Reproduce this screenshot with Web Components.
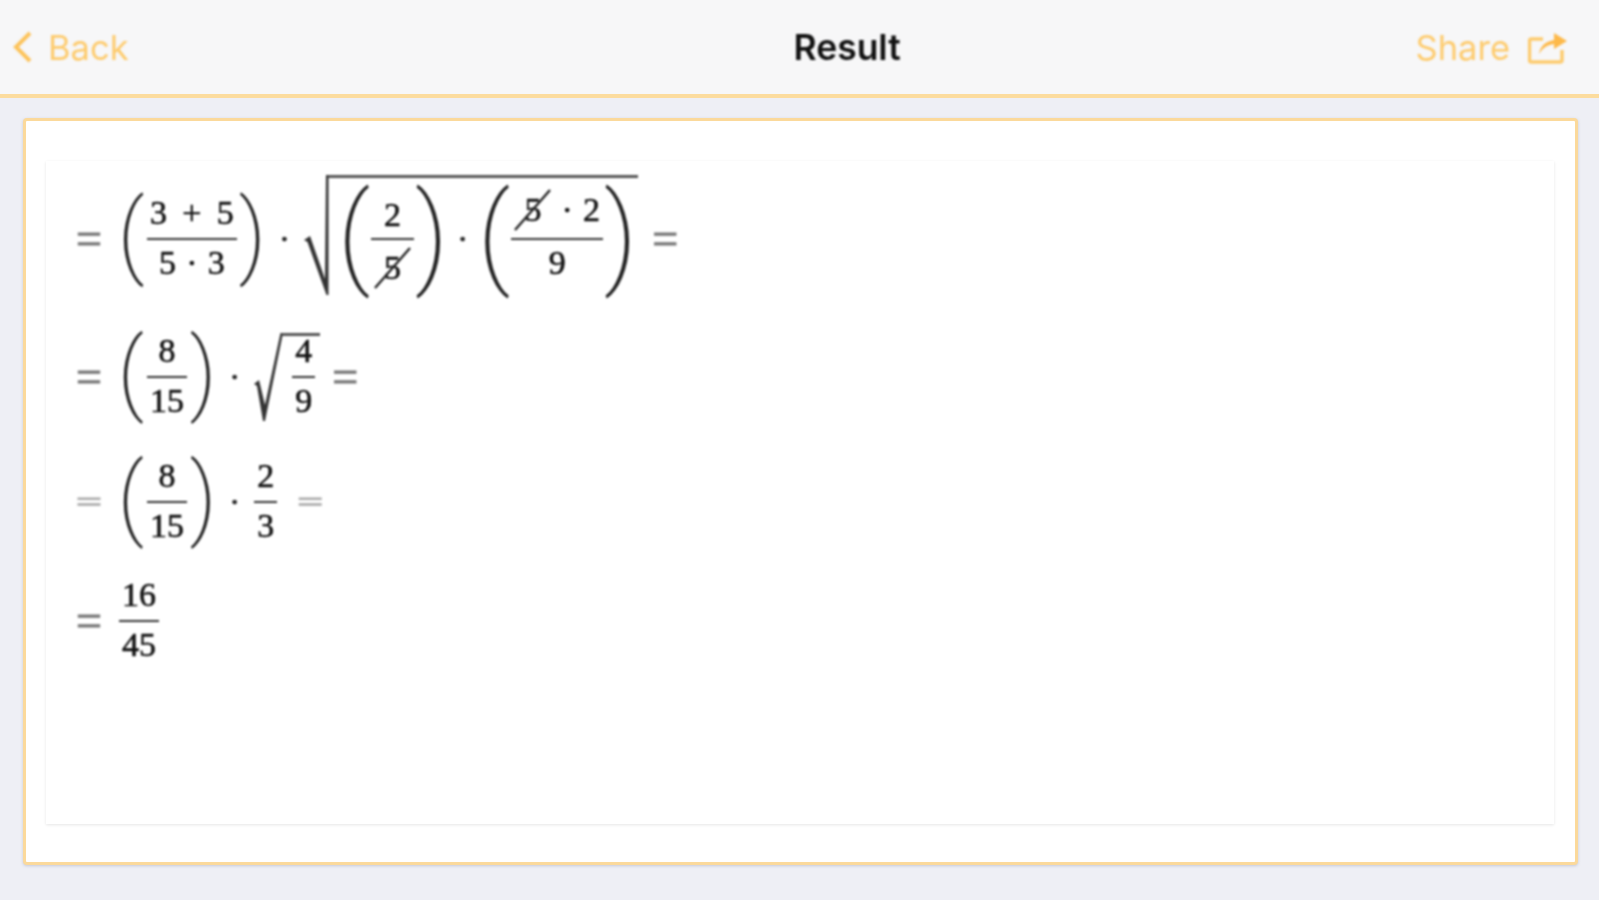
<!DOCTYPE html>
<html>
<head>
<meta charset="utf-8">
<title>Result</title>
<style>
  html, body { margin: 0; height: 100%; }
  body { background: #eeeff5; display: flex; flex-direction: column; height: 900px; overflow: hidden; }
</style>
</head>
<body>
<nav-bar></nav-bar>
<result-card>
  <math-row style="margin-top:14px">
    <math-op>=</math-op>
    <math-parens h="92"><math-frac><span slot="num">3 + 5</span><span slot="den" style="word-spacing:.05em">5 · 3</span></math-frac></math-parens>
    <math-op dot>·</math-op>
    <math-sqrt big>
      <math-parens h="112" w="22"><math-frac drop><span slot="num">2</span><span slot="den"><math-cancel>5</math-cancel></span></math-frac></math-parens>
      <math-op dot style="margin:0 15px">·</math-op>
      <math-parens h="112" w="22"><math-frac lift><span slot="num" style="word-spacing:.05em"><math-cancel>5</math-cancel> · 2</span><span slot="den">9</span></math-frac></math-parens>
    </math-sqrt>
    <math-op style="margin-left:14px">=</math-op>
  </math-row>
  <math-row style="margin-top:29px">
    <math-op>=</math-op>
    <math-parens h="90"><math-frac><span slot="num">8</span><span slot="den">15</span></math-frac></math-parens>
    <math-op dot>·</math-op>
    <math-sqrt><math-frac><span slot="num">4</span><span slot="den">9</span></math-frac></math-sqrt>
    <math-op style="margin-left:12px">=</math-op>
  </math-row>
  <math-row style="margin-top:35px">
    <math-op tight>=</math-op>
    <math-parens h="90"><math-frac><span slot="num">8</span><span slot="den">15</span></math-frac></math-parens>
    <math-op dot>·</math-op>
    <math-frac><span slot="num">2</span><span slot="den">3</span></math-frac>
    <math-op tight>=</math-op>
  </math-row>
  <math-row style="margin-top:31px">
    <math-op style="margin-right:17px">=</math-op>
    <math-frac><span slot="num">16</span><span slot="den">45</span></math-frac>
  </math-row>
</result-card>

<script>
class NavBar extends HTMLElement {
    constructor() {
        super();
        this.attachShadow({ mode: 'open' });
        this.shadowRoot.innerHTML = `
            <style>
                :host {
                    display: block;
                    flex: none;
                    height: 94px;
                    background: #f7f7f8;
                    border-bottom: 4px solid #fcdc9e;
                    font: 34.5px Inter, Roboto, "Liberation Sans", sans-serif;
                    color: #fdcb6e;
                }
                .bar {
                    height: 100%;
                    display: flex;
                    align-items: center;
                    padding: 0 32px 0 13px;
                    filter: blur(1px);
                }
                .back { display: flex; align-items: center; gap: 16px; }
                .title {
                    flex: 1;
                    text-align: center;
                    padding-left: 150px;
                    color: #111;
                    font-weight: 600;
                    font-size: 35.5px;
                }
                .share { display: flex; align-items: center; gap: 18px; }
                svg { display: block; }
            </style>
            <div class="bar">
                <div class="back">
                    <svg width="19" height="32" viewBox="0 0 19 32"><path d="M17 2 L3 16 L17 30" fill="none" stroke="#fcc35c" stroke-width="4"/></svg>
                    <span>Back</span>
                </div>
                <div class="title">Result</div>
                <div class="share">
                    <span>Share</span>
                    <svg width="39" height="33" viewBox="0 0 39 33">
                        <path d="M15 8 H3.5 Q1.5 8 1.5 10 V29 Q1.5 31 3.5 31 H32 Q34 31 34 29 V19" fill="none" stroke="#fdcb6e" stroke-width="3.5"/>
                        <path d="M11 23 Q13 11 26 9 V2 L39 10 L26 18 V13 Q16 14 11 23 Z" fill="#fdb94a"/>
                    </svg>
                </div>
            </div>
        `;
    }
}

class ResultCard extends HTMLElement {
    constructor() {
        super();
        this.attachShadow({ mode: 'open' });
        this.shadowRoot.innerHTML = `
            <style>
                :host {
                    display: flex;
                    flex: 1;
                    margin: 20px 21px 35px 23px;
                    padding: 40px 21px 38px 20px;
                    background: #fff;
                    border: 3px solid #fbd99b;
                    border-radius: 4px;
                    box-shadow: 0 1px 3px rgba(120, 130, 160, .35);
                }
                .panel {
                    flex: 1;
                    background: #fff;
                    box-shadow: 0 1px 3px rgba(0, 0, 0, .1);
                    padding-left: 30px;
                    overflow: hidden;
                }
                .math {
                    overflow: hidden;
                    padding-bottom: 8px;
                    filter: blur(1px);
                }
            </style>
            <div class="panel"><div class="math"><slot></slot></div></div>
        `;
    }
}

class MathRow extends HTMLElement {
    constructor() {
        super();
        this.attachShadow({ mode: 'open' });
        this.shadowRoot.innerHTML = `
            <style>
                :host {
                    display: flex;
                    align-items: center;
                    font: 34px/1 "Liberation Serif", serif;
                    color: #111;
                    -webkit-text-stroke: 0.6px #111;
                }
            </style>
            <slot></slot>
        `;
    }
}

class MathOp extends HTMLElement {
    constructor() {
        super();
        this.attachShadow({ mode: 'open' });
        this.shadowRoot.innerHTML = `
            <style>
                :host {
                    display: block;
                    flex: none;
                    font-size: 46px;
                    line-height: 1;
                    color: #777;
                    -webkit-text-stroke: 1px #777;
                    margin: 0 19px 0 0;
                }
                :host([tight]) { color: #aaa; -webkit-text-stroke: 1.6px #aaa; }
                :host([tight]) span { display: block; transform: scaleY(0.65); }
                :host([tight]:not(:first-child)) { margin-left: 20px; }
                :host([dot]) {
                    font-size: 34px;
                    color: #222;
                    -webkit-text-stroke: 0.6px #222;
                    margin: 0 14px 0 16px;
                }
            </style>
            <span><slot></slot></span>
        `;
    }
}

class MathFrac extends HTMLElement {
    constructor() {
        super();
        this.attachShadow({ mode: 'open' });
        this.shadowRoot.innerHTML = `
            <style>
                :host {
                    display: inline-grid;
                    flex: none;
                    grid-template-rows: 1fr auto 1fr;
                    text-align: center;
                    word-spacing: 0.2em;
                    white-space: nowrap;
                }
                .num { padding: 0 3px 8px; align-self: end; }
                .den { padding: 6px 3px 0; }
                .bar { height: 2px; background: #333; }
                :host([lift]) .num { padding-bottom: 11px; }
                :host([drop]) .den { padding-top: 11px; }
                :host([drop]) .num { padding-bottom: 6px; }
            </style>
            <div class="num"><slot name="num"></slot></div>
            <div class="bar"></div>
            <div class="den"><slot name="den"></slot></div>
        `;
    }
}

class MathParens extends HTMLElement {
    constructor() {
        super();
        this.attachShadow({ mode: 'open' });
    }

    connectedCallback() {
        const h = parseInt(this.getAttribute('h')) || 90;
        const w = parseInt(this.getAttribute('w')) || 20;
        this.shadowRoot.innerHTML = `
            <style>
                :host {
                    display: flex;
                    flex: none;
                    align-items: center;
                    gap: 6px;
                }
                .p {
                    display: flex;
                    justify-content: center;
                    align-items: center;
                    width: ${w}px;
                    height: ${h}px;
                    font: 200 ${h}px/1 Roboto, "Liberation Sans", sans-serif;
                    -webkit-text-stroke: 0;
                }
                .p span {
                    display: block;
                    transform: translateY(-0.04em) scaleX(0.95);
                    color: #222;
                }
            </style>
            <div class="p"><span>(</span></div>
            <slot></slot>
            <div class="p"><span>)</span></div>
        `;
    }
}

class MathSqrt extends HTMLElement {
    constructor() {
        super();
        this.attachShadow({ mode: 'open' });
    }

    connectedCallback() {
        const big = this.hasAttribute('big');
        const rad = big
            ? '<svg width="25" height="120" viewBox="0 0 25 120" preserveAspectRatio="none"><path d="M0 65 L6 61 L21 104 L22 0 L24.5 0 L24.5 120 L22.5 120 L3.5 67 Z"/></svg>'
            : '<svg width="29" height="88" viewBox="0 0 29 88" preserveAspectRatio="none"><path d="M0 51 L5 47 L11 72 L26.5 0 L29 0 L11 88 L9 88 L3 53 Z"/></svg>';
        this.shadowRoot.innerHTML = `
            <style>
                :host {
                    display: flex;
                    flex: none;
                    padding-bottom: ${big ? 8 : 0}px;
                }
                svg { display: block; flex: none; fill: #333; }
                .body {
                    display: flex;
                    align-items: center;
                    border-top: 3px solid #555;
                    height: ${big ? 117 : 85}px;
                    box-sizing: content-box;
                    margin-left: -1px;
                    padding: 0 ${big ? '7px 0 15px' : '5px 0 10px'};
                }
                .inner { display: flex; align-items: center; margin-top: ${big ? 5 : -3}px; }
            </style>
            ${rad}
            <div class="body"><div class="inner"><slot></slot></div></div>
        `;
    }
}

class MathCancel extends HTMLElement {
    constructor() {
        super();
        this.attachShadow({ mode: 'open' });
        this.shadowRoot.innerHTML = `
            <style>
                :host {
                    display: inline-block;
                    position: relative;
                    width: 37px;
                    text-align: center;
                    word-spacing: 0;
                }
                svg {
                    position: absolute;
                    left: 0;
                    top: 50%;
                    transform: translateY(-50%);
                }
            </style>
            <slot></slot>
            <svg width="37" height="42" viewBox="0 0 37 42"><path d="M1 41 L36 1" stroke="#222" stroke-width="2.4"/></svg>
        `;
    }
}

customElements.define('nav-bar', NavBar);
customElements.define('result-card', ResultCard);
customElements.define('math-row', MathRow);
customElements.define('math-op', MathOp);
customElements.define('math-frac', MathFrac);
customElements.define('math-parens', MathParens);
customElements.define('math-sqrt', MathSqrt);
customElements.define('math-cancel', MathCancel);
</script>
</body>
</html>
